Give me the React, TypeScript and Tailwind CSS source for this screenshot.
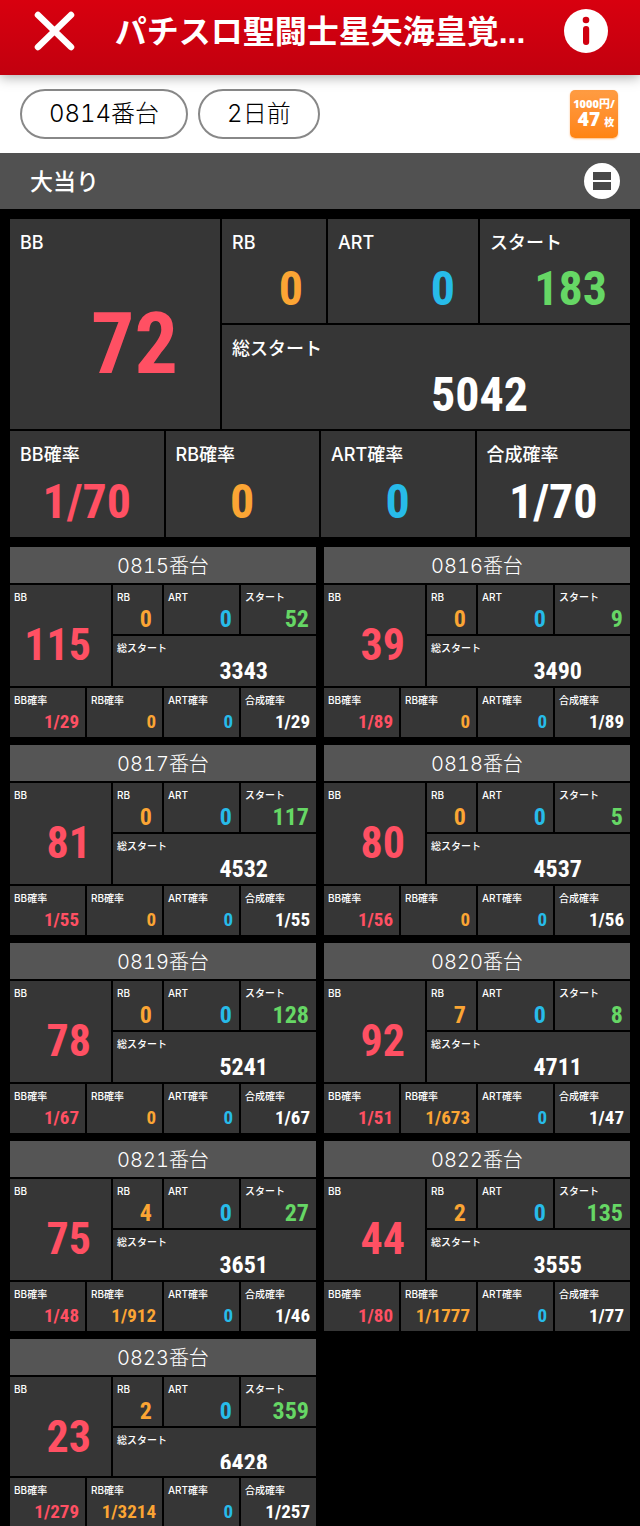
import clsx from 'clsx'

interface Machine {
  no: string
  bb: string
  rb: string
  art: string
  start: string
  total: string
  bbRate: string
  rbRate: string
  artRate: string
  sumRate: string
}

type Tone = 'red' | 'orange' | 'blue' | 'green' | 'white'

const TONES: Record<Tone, string> = {
  red: 'text-[#ff5063]',
  orange: 'text-[#fba534]',
  blue: 'text-[#27bbe9]',
  green: 'text-[#66d765]',
  white: 'text-white',
}

const CURRENT: Machine = {
  no: '0814', bb: '72', rb: '0', art: '0', start: '183', total: '5042',
  bbRate: '1/70', rbRate: '0', artRate: '0', sumRate: '1/70',
}

const MACHINES: Machine[] = [
  { no: '0815', bb: '115', rb: '0', art: '0', start: '52', total: '3343', bbRate: '1/29', rbRate: '0', artRate: '0', sumRate: '1/29' },
  { no: '0816', bb: '39', rb: '0', art: '0', start: '9', total: '3490', bbRate: '1/89', rbRate: '0', artRate: '0', sumRate: '1/89' },
  { no: '0817', bb: '81', rb: '0', art: '0', start: '117', total: '4532', bbRate: '1/55', rbRate: '0', artRate: '0', sumRate: '1/55' },
  { no: '0818', bb: '80', rb: '0', art: '0', start: '5', total: '4537', bbRate: '1/56', rbRate: '0', artRate: '0', sumRate: '1/56' },
  { no: '0819', bb: '78', rb: '0', art: '0', start: '128', total: '5241', bbRate: '1/67', rbRate: '0', artRate: '0', sumRate: '1/67' },
  { no: '0820', bb: '92', rb: '7', art: '0', start: '8', total: '4711', bbRate: '1/51', rbRate: '1/673', artRate: '0', sumRate: '1/47' },
  { no: '0821', bb: '75', rb: '4', art: '0', start: '27', total: '3651', bbRate: '1/48', rbRate: '1/912', artRate: '0', sumRate: '1/46' },
  { no: '0822', bb: '44', rb: '2', art: '0', start: '135', total: '3555', bbRate: '1/80', rbRate: '1/1777', artRate: '0', sumRate: '1/77' },
  { no: '0823', bb: '23', rb: '2', art: '0', start: '359', total: '6428', bbRate: '1/279', rbRate: '1/3214', artRate: '0', sumRate: '1/257' },
]

interface CellProps {
  label: string
  value: string
  tone: Tone
  large?: boolean
  className?: string
  valueClass: string
}

function Cell({ label, value, tone, large, className, valueClass }: CellProps) {
  return (
    <div className={clsx('flex min-w-0 flex-col bg-[#363636]', className)}>
      <dt
        className={clsx(
          "font-['Inter','Noto_Sans_CJK_JP',sans-serif] font-medium leading-none whitespace-nowrap text-white",
          large ? 'pt-[15px] pl-2.5 text-[18px]' : 'pt-[7px] pl-1 text-[10px]',
        )}
      >
        {label}
      </dt>
      <dd
        className={clsx(
          "mt-auto font-['Liberation_Sans_Narrow','Roboto_Condensed','Liberation_Sans',sans-serif] font-bold leading-none whitespace-nowrap",
          TONES[tone],
          valueClass,
        )}
      >
        {value}
      </dd>
    </div>
  )
}

function MainPanel({ m }: { m: Machine }) {
  const count = 'pr-[23px] pb-[10px] text-right text-[48px]'
  const rate = 'pb-[11px] text-center text-[48px]'
  return (
    <dl className="flex flex-col gap-0.5">
      <div className="grid grid-cols-[210fr_104fr_150fr_150fr] grid-rows-[104px_104px] gap-0.5">
        <Cell large label="BB" value={m.bb} tone="red" className="row-span-2" valueClass="pr-[42px] pb-[42px] text-right text-[86px]" />
        <Cell large label="RB" value={m.rb} tone="orange" valueClass={count} />
        <Cell large label="ART" value={m.art} tone="blue" valueClass={count} />
        <Cell large label="スタート" value={m.start} tone="green" valueClass={count} />
        <Cell large label="総スタート" value={m.total} tone="white" className="col-span-3" valueClass="pr-[25%] pb-[10px] text-right text-[48px]" />
      </div>
      <div className="grid h-[106px] grid-cols-4 gap-0.5">
        <Cell large label="BB確率" value={m.bbRate} tone="red" valueClass={rate} />
        <Cell large label="RB確率" value={m.rbRate} tone="orange" valueClass={rate} />
        <Cell large label="ART確率" value={m.artRate} tone="blue" valueClass={rate} />
        <Cell large label="合成確率" value={m.sumRate} tone="white" valueClass={rate} />
      </div>
    </dl>
  )
}

function MachineCard({ m, last }: { m: Machine; last: boolean }) {
  const count = 'pr-[7px] pb-[3px] text-right text-[24px]'
  const rate = 'pr-[6px] pb-[6px] text-right text-[19px]'
  return (
    <section className="flex min-w-0 flex-col gap-0.5">
      <h2 className="flex h-9 items-center justify-center bg-[#555] pt-0.5 font-['Inter','Noto_Sans_CJK_JP',sans-serif] text-[20px] font-light text-white tabular-nums">
        {m.no}番台
      </h2>
      <dl className="flex flex-col gap-0.5">
        <div
          className={clsx(
            'grid grid-cols-[101fr_49fr_75fr_75fr] gap-0.5',
            last ? 'grid-rows-[49px_48px]' : 'grid-rows-[49px_50px]',
          )}
        >
          <Cell label="BB" value={m.bb} tone="red" className="row-span-2" valueClass={clsx('pr-[20px] text-right text-[44px]', last ? 'pb-[17px]' : 'pb-[19px]')} />
          <Cell label="RB" value={m.rb} tone="orange" valueClass="pr-[10px] pb-[3px] text-right text-[24px]" />
          <Cell label="ART" value={m.art} tone="blue" valueClass={count} />
          <Cell label="スタート" value={m.start} tone="green" valueClass={count} />
          <Cell
            label="総スタート"
            value={m.total}
            tone="white"
            className="col-span-3"
            valueClass={clsx('pr-[48px] text-right text-[24px]', last ? 'mb-[7px] h-[18px] overflow-hidden' : 'pb-[3px]')}
          />
        </div>
        <div className="grid h-[49px] grid-cols-4 gap-0.5">
          <Cell label="BB確率" value={m.bbRate} tone="red" valueClass={rate} />
          <Cell label="RB確率" value={m.rbRate} tone="orange" valueClass={rate} />
          <Cell label="ART確率" value={m.artRate} tone="blue" valueClass={rate} />
          <Cell label="合成確率" value={m.sumRate} tone="white" valueClass={rate} />
        </div>
      </dl>
    </section>
  )
}

export default function App() {
  const pill =
    "h-[50px] rounded-full border-2 border-[#888] px-[27px] font-['Inter','Noto_Sans_CJK_JP',sans-serif] text-[24px] font-light leading-none whitespace-nowrap text-black tabular-nums"
  return (
    <div className="h-screen overflow-hidden bg-black font-['Noto_Sans_CJK_JP',sans-serif]">
      <header className="relative flex h-[75px] items-start justify-between bg-linear-to-b from-[#d8000f] to-[#c2000f] px-8 pt-[9px] shadow-[0_2px_12px_rgba(0,0,0,0.35)]">
        <button aria-label="閉じる" className="shrink-0">
          <svg width="44" height="44" viewBox="0 0 44 44" fill="none" stroke="#fff" strokeWidth="6.5" strokeLinecap="round">
            <path d="M6 6 39 38M39 6 6 38" />
          </svg>
        </button>
        <h1 className="truncate font-['Liberation_Sans','Noto_Sans_CJK_JP',sans-serif] text-[32px] font-bold leading-[46px] text-white">
          パチスロ聖闘士星矢海皇覚...
        </h1>
        <button aria-label="情報" className="shrink-0">
          <svg width="44" height="44" viewBox="0 0 44 44">
            <circle cx="22" cy="22" r="22" fill="#fff" />
            <circle cx="22" cy="11" r="3.3" fill="#d0000f" />
            <rect x="19" y="17" width="6.2" height="19" rx="3" fill="#d0000f" />
          </svg>
        </button>
      </header>

      <div className="flex items-center gap-2.5 bg-white py-3.5 pr-[22px] pl-5">
        <button className={pill}>0814番台</button>
        <button className={pill}>2日前</button>
        <div className="ml-auto flex h-12 w-12 flex-col items-center justify-center rounded-[5px] bg-linear-to-b from-[#ff9c42] to-[#ff8410] font-['Open_Sans','Noto_Sans_CJK_JP',sans-serif] font-extrabold text-white shadow-[0_1px_2px_rgba(255,140,40,0.6)]">
          <span className="text-[11px] leading-[14px] whitespace-nowrap">1000円/</span>
          <span className="flex items-baseline gap-1 pl-1 text-[19px] leading-[17px]">
            47<small className="text-[10px]">枚</small>
          </span>
        </div>
      </div>

      <div className="flex h-14 items-center justify-between bg-[#515151] pr-5 pl-[30px]">
        <h2 className="pb-0.5 text-[23px] font-medium leading-none text-white">大当り</h2>
        <button aria-label="表示切替">
          <svg width="36" height="36" viewBox="0 0 36 36">
            <circle cx="18" cy="18" r="18" fill="#fff" />
            <path d="M9 9h18v8H9zM9 19h18v8H9z" fill="#484848" />
          </svg>
        </button>
      </div>

      <main className="flex flex-col gap-2.5 p-2.5">
        <MainPanel m={CURRENT} />
        <div className="grid grid-cols-2 gap-2">
          {MACHINES.map((m, i) => (
            <MachineCard key={m.no} m={m} last={i === MACHINES.length - 1} />
          ))}
        </div>
      </main>
    </div>
  )
}
